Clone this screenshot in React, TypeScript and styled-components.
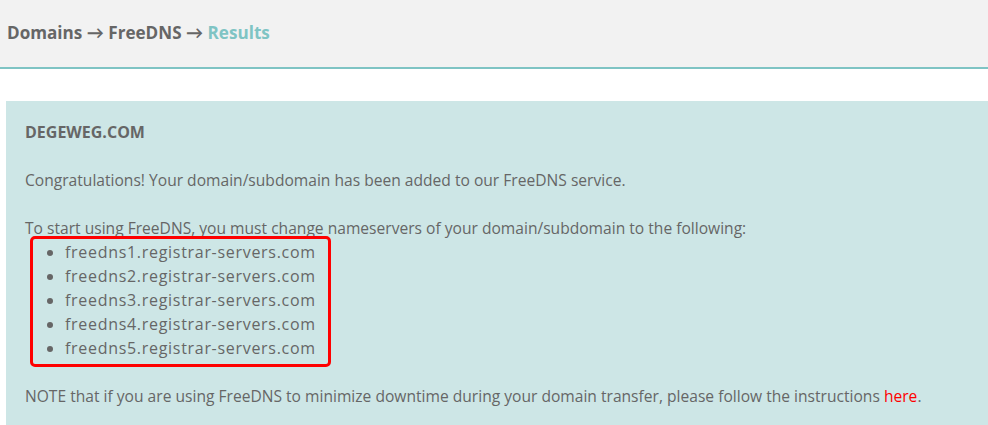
import React from "react";
import styled, { createGlobalStyle } from "styled-components";

const Global = createGlobalStyle`
  html, body { margin: 0; padding: 0; background: #ffffff; }
  body { font-family: "Open Sans", "Lato", sans-serif; color: #666666; }
`;

const Header = styled.header`
  height: 67px;
  background: #f2f2f2;
  border-bottom: 2px solid #7fc4c4;
  display: flex;
  align-items: center;
  padding: 0 7px;
`;

const Crumbs = styled.div`
  font-size: 17.1px;
  font-weight: 700;
  color: #666666;
  margin-top: -3px;
`;

const Current = styled.span`
  color: #7fc4c4;
`;

const Panel = styled.section`
  margin: 32px 0 0 6px;
  background: #cde6e6;
  padding: 19px 19px 14px 19px;
  font-size: 15.6px;
  line-height: 24px;
`;

const Title = styled.h2`
  margin: 0 0 24px;
  font-size: 16px;
  font-weight: 700;
  line-height: 24px;
  text-transform: uppercase;
  color: #666666;
`;

const Para = styled.p<{ $flush?: boolean }>`
  margin: 0 0 ${(p) => (p.$flush ? 0 : 24)}px;
`;

const ListWrap = styled.div`
  position: relative;
  margin: 0 0 24px;
`;

const List = styled.ul`
  margin: 0;
  padding: 0 0 0 40px;
`;

const Item = styled.li`
  font-size: 16px;
  letter-spacing: 0.7px;
  line-height: 24px;
`;

const Highlight = styled.div`
  position: absolute;
  left: 5px;
  top: -4px;
  width: 295px;
  height: 125px;
  border: 3px solid #ff0000;
  border-radius: 5px;
  pointer-events: none;
`;

const Link = styled.a`
  color: #ff0000;
  text-decoration: none;
`;

const servers = [1, 2, 3, 4, 5].map((n) => `freedns${n}.registrar-servers.com`);

export default function App() {
  return (
    <>
      <Global />
      <Header>
        <Crumbs>
          Domains → FreeDNS → <Current>Results</Current>
        </Crumbs>
      </Header>
      <Panel>
        <Title>degeweg.com</Title>
        <Para>Congratulations! Your domain/subdomain has been added to our FreeDNS service.</Para>
        <Para $flush>
          To start using FreeDNS, you must change nameservers of your domain/subdomain to the following:
        </Para>
        <ListWrap>
          <List>
            {servers.map((s) => (
              <Item key={s}>{s}</Item>
            ))}
          </List>
          <Highlight />
        </ListWrap>
        <Para>
          NOTE that if you are using FreeDNS to minimize downtime during your domain transfer, please follow the
          instructions <Link href="#">here</Link>.
        </Para>
      </Panel>
    </>
  );
}
